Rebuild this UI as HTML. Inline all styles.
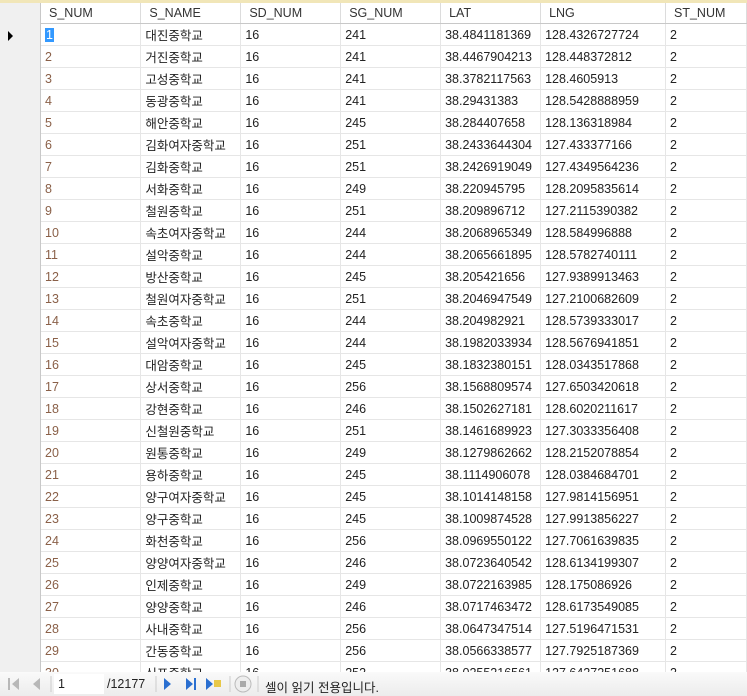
<!DOCTYPE html>
<html><head><meta charset="utf-8"><style>
body{margin:0;width:747px;height:696px;overflow:hidden;background:#fff;font-family:"Liberation Sans","Noto Sans CJK KR",sans-serif;font-size:12.5px;color:#222;position:relative}
#top{position:absolute;left:0;top:0;width:747px;height:3px;background:#f1e6b8}
#rh{position:absolute;left:0;top:3px;width:40px;height:670px;background:#f0f0f0;border-right:1px solid #c8c8c8}
#hdr{position:absolute;left:41px;top:3px;width:706px;height:21px;background:#f4f4f4;border-bottom:1px solid #c8c8c8}
table{position:absolute;left:41px;top:3px;border-collapse:collapse;table-layout:fixed}
td,th{height:21px;padding:0 0 0 4px;border-right:1px solid #e6e6e6;border-bottom:1px solid #e6e6e6;white-space:nowrap;overflow:hidden;text-align:left;font-weight:normal}
th{height:20px;border-right:1px solid #dcdcdc;border-bottom:1px solid #c8c8c8;color:#333;padding-left:8px}
td:first-child{color:#8a6048}
#bar{position:absolute;left:0;top:672px;width:747px;height:24px;background:linear-gradient(#fafafa,#ececec);font-size:12.5px}
.arrow{position:absolute;top:0}
#sel{background:#3399ff;color:#fff;padding:0 1px}
#ptr{position:absolute;left:8px;top:31px;width:0;height:0;border-left:5px solid #000;border-top:5px solid transparent;border-bottom:5px solid transparent}
</style></head><body>
<div id="top"></div>
<div id="rh"></div>
<div id="ptr"></div>
<table>
<colgroup><col style="width:100px"><col style="width:100px"><col style="width:100px"><col style="width:100px"><col style="width:100px"><col style="width:125px"><col style="width:81px"></colgroup>
<tr><th>S_NUM</th><th>S_NAME</th><th>SD_NUM</th><th>SG_NUM</th><th>LAT</th><th>LNG</th><th>ST_NUM</th></tr>
<tr><td><span id="sel">1</span></td><td>대진중학교</td><td>16</td><td>241</td><td>38.4841181369</td><td>128.4326727724</td><td>2</td></tr>
<tr><td>2</td><td>거진중학교</td><td>16</td><td>241</td><td>38.4467904213</td><td>128.448372812</td><td>2</td></tr>
<tr><td>3</td><td>고성중학교</td><td>16</td><td>241</td><td>38.3782117563</td><td>128.4605913</td><td>2</td></tr>
<tr><td>4</td><td>동광중학교</td><td>16</td><td>241</td><td>38.29431383</td><td>128.5428888959</td><td>2</td></tr>
<tr><td>5</td><td>해안중학교</td><td>16</td><td>245</td><td>38.284407658</td><td>128.136318984</td><td>2</td></tr>
<tr><td>6</td><td>김화여자중학교</td><td>16</td><td>251</td><td>38.2433644304</td><td>127.433377166</td><td>2</td></tr>
<tr><td>7</td><td>김화중학교</td><td>16</td><td>251</td><td>38.2426919049</td><td>127.4349564236</td><td>2</td></tr>
<tr><td>8</td><td>서화중학교</td><td>16</td><td>249</td><td>38.220945795</td><td>128.2095835614</td><td>2</td></tr>
<tr><td>9</td><td>철원중학교</td><td>16</td><td>251</td><td>38.209896712</td><td>127.2115390382</td><td>2</td></tr>
<tr><td>10</td><td>속초여자중학교</td><td>16</td><td>244</td><td>38.2068965349</td><td>128.584996888</td><td>2</td></tr>
<tr><td>11</td><td>설악중학교</td><td>16</td><td>244</td><td>38.2065661895</td><td>128.5782740111</td><td>2</td></tr>
<tr><td>12</td><td>방산중학교</td><td>16</td><td>245</td><td>38.205421656</td><td>127.9389913463</td><td>2</td></tr>
<tr><td>13</td><td>철원여자중학교</td><td>16</td><td>251</td><td>38.2046947549</td><td>127.2100682609</td><td>2</td></tr>
<tr><td>14</td><td>속초중학교</td><td>16</td><td>244</td><td>38.204982921</td><td>128.5739333017</td><td>2</td></tr>
<tr><td>15</td><td>설악여자중학교</td><td>16</td><td>244</td><td>38.1982033934</td><td>128.5676941851</td><td>2</td></tr>
<tr><td>16</td><td>대암중학교</td><td>16</td><td>245</td><td>38.1832380151</td><td>128.0343517868</td><td>2</td></tr>
<tr><td>17</td><td>상서중학교</td><td>16</td><td>256</td><td>38.1568809574</td><td>127.6503420618</td><td>2</td></tr>
<tr><td>18</td><td>강현중학교</td><td>16</td><td>246</td><td>38.1502627181</td><td>128.6020211617</td><td>2</td></tr>
<tr><td>19</td><td>신철원중학교</td><td>16</td><td>251</td><td>38.1461689923</td><td>127.3033356408</td><td>2</td></tr>
<tr><td>20</td><td>원통중학교</td><td>16</td><td>249</td><td>38.1279862662</td><td>128.2152078854</td><td>2</td></tr>
<tr><td>21</td><td>용하중학교</td><td>16</td><td>245</td><td>38.1114906078</td><td>128.0384684701</td><td>2</td></tr>
<tr><td>22</td><td>양구여자중학교</td><td>16</td><td>245</td><td>38.1014148158</td><td>127.9814156951</td><td>2</td></tr>
<tr><td>23</td><td>양구중학교</td><td>16</td><td>245</td><td>38.1009874528</td><td>127.9913856227</td><td>2</td></tr>
<tr><td>24</td><td>화천중학교</td><td>16</td><td>256</td><td>38.0969550122</td><td>127.7061639835</td><td>2</td></tr>
<tr><td>25</td><td>양양여자중학교</td><td>16</td><td>246</td><td>38.0723640542</td><td>128.6134199307</td><td>2</td></tr>
<tr><td>26</td><td>인제중학교</td><td>16</td><td>249</td><td>38.0722163985</td><td>128.175086926</td><td>2</td></tr>
<tr><td>27</td><td>양양중학교</td><td>16</td><td>246</td><td>38.0717463472</td><td>128.6173549085</td><td>2</td></tr>
<tr><td>28</td><td>사내중학교</td><td>16</td><td>256</td><td>38.0647347514</td><td>127.5196471531</td><td>2</td></tr>
<tr><td>29</td><td>간동중학교</td><td>16</td><td>256</td><td>38.0566338577</td><td>127.7925187369</td><td>2</td></tr>
<tr><td>30</td><td>신포중학교</td><td>16</td><td>252</td><td>38.0255216561</td><td>127.6427251688</td><td>2</td></tr>
</table>
<div id="bar">
<svg width="747" height="24" style="position:absolute;left:0;top:0">
<rect x="8" y="6" width="2" height="12" fill="#b8b8b8"/><path d="M19 6 L12 12 L19 18Z" fill="#b8b8b8"/>
<path d="M40 6 L33 12 L40 18Z" fill="#b8b8b8"/>
<line x1="51" y1="4" x2="51" y2="20" stroke="#ccc"/>
<rect x="54" y="2" width="50" height="20" fill="#fff"/>
<line x1="156" y1="4" x2="156" y2="20" stroke="#ccc"/>
<path d="M164 6 L171 12 L164 18Z" fill="#2a6fd0"/>
<path d="M186 6 L193 12 L186 18Z" fill="#2a6fd0"/><rect x="194" y="6" width="2" height="12" fill="#2a6fd0"/>
<path d="M206 6 L213 12 L206 18Z" fill="#2a6fd0"/><rect x="214" y="8" width="7" height="7" fill="#e8c848"/>
<line x1="230" y1="4" x2="230" y2="20" stroke="#ccc"/>
<circle cx="243" cy="12" r="8" fill="#eee" stroke="#bbb"/><rect x="240" y="9" width="6" height="6" fill="#aaa"/>
<line x1="258" y1="4" x2="258" y2="20" stroke="#ccc"/>
</svg>
<span style="position:absolute;left:58px;top:5px">1</span>
<span style="position:absolute;left:107px;top:5px">/12177</span>
<span style="position:absolute;left:265px;top:5px">셀이 읽기 전용입니다.</span>
</div>
</body></html>
